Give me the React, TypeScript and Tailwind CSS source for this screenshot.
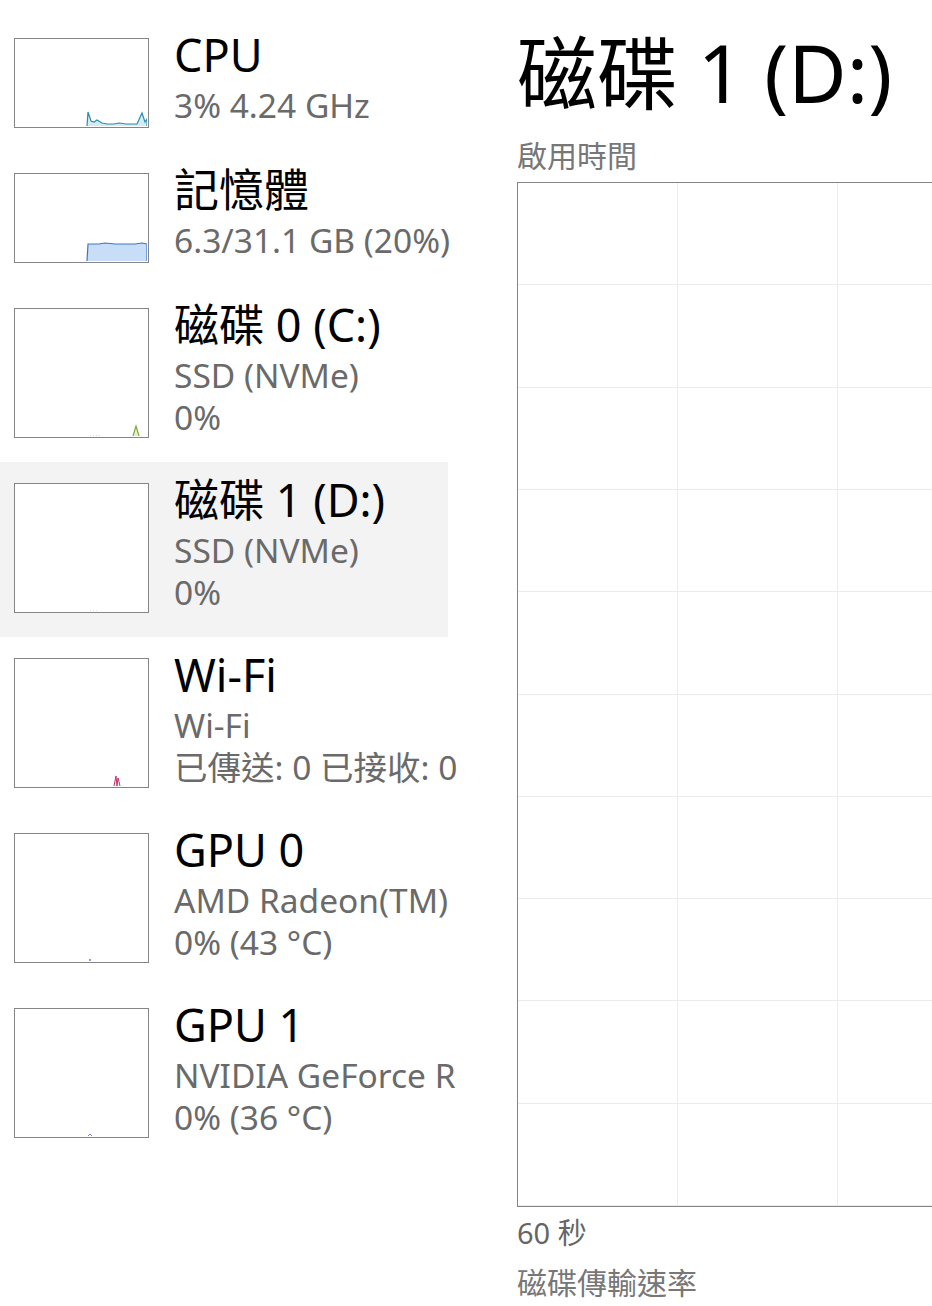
import type { ReactNode } from "react"

type Item = {
    title: string
    lines: string[]
    tall: boolean
    selected?: boolean
    graph: ReactNode
}

function MiniGraph({ tall, children }: { tall: boolean, children: ReactNode }) {
    const h = tall ? 130 : 90
    return (
        <div className={`shrink-0 w-[135px] border-[1.5px] border-[#858585] bg-white ${tall ? "h-[130px]" : "h-[90px]"}`}>
            <svg width="132" height={h - 3} viewBox={`0 0 132 ${h - 3}`} className="block">
                {children}
            </svg>
        </div>
    )
}

const items: Item[] = [
    {
        title: "CPU",
        lines: ["3% 4.24 GHz"],
        tall: false,
        graph: (
            <polyline
                points="72,87 73,73 76,82 79,83 82,81 87,84 92,85 99,85 104,84 111,85 122,85 127,74 130,83 132,80 132,87"
                fill="#d3ebf3" stroke="#2a8db0" strokeWidth="1.2" />
        ),
    },
    {
        title: "記憶體",
        lines: ["6.3/31.1 GB (20%)"],
        tall: false,
        graph: (
            <polyline
                points="72,87 73,70 84,70 90,69 100,70 120,70 127,69 132,70 132,87"
                fill="#c8ddf8" stroke="#3b78cc" strokeWidth="1.2" />
        ),
    },
    {
        title: "磁碟 0 (C:)",
        lines: ["SSD (NVMe)", "0%"],
        tall: true,
        graph: (
            <>
                <polyline points="75,127 85,127" fill="none" stroke="#a6c47a" strokeWidth="1" strokeDasharray="1 2" />
                <polyline points="118,127 121,117 124,127" fill="#e6f0c8" stroke="#7aa83a" strokeWidth="1.2" />
            </>
        ),
    },
    {
        title: "磁碟 1 (D:)",
        lines: ["SSD (NVMe)", "0%"],
        tall: true,
        selected: true,
        graph: <polyline points="75,127 84,127" fill="none" stroke="#b9ccb0" strokeWidth="1" strokeDasharray="1 2" />,
    },
    {
        title: "Wi-Fi",
        lines: ["Wi-Fi", "已傳送: 0 已接收: 0"],
        tall: true,
        graph: (
            <polyline points="99,127 101,117 102,127 103,119 105,127" fill="none" stroke="#c4306c" strokeWidth="1" />
        ),
    },
    {
        title: "GPU 0",
        lines: ["AMD Radeon(TM)", "0% (43 °C)"],
        tall: true,
        graph: <circle cx="75" cy="126" r="1" fill="#7a6fd0" />,
    },
    {
        title: "GPU 1",
        lines: ["NVIDIA GeForce R", "0% (36 °C)"],
        tall: true,
        graph: <polyline points="73,127 75,125 77,127" fill="none" stroke="#8a7ad8" strokeWidth="1" />,
    },
]

export default function App() {
    return (
        <div
            className="w-[932px] h-[1306px] overflow-hidden bg-white flex"
            style={{ fontFamily: '"Noto Sans", "Noto Sans CJK TC", sans-serif' }}
        >
            {/* left list */}
            <aside className="w-[448px] shrink-0 flex flex-col pt-[17px]">
                {items.map((item) => (
                    <section
                        key={item.title}
                        className={`flex gap-[25px] pl-[14px] pt-[21px] pb-[24px] ${item.selected ? "bg-[#f3f3f3]" : ""}`}
                    >
                        <MiniGraph tall={item.tall}>{item.graph}</MiniGraph>
                        <div className="flex flex-col whitespace-nowrap -mt-[12px]">
                            <span className="text-[45px] leading-[58px] text-black">{item.title}</span>
                            {item.lines.map((line) => (
                                <span key={line} className="text-[33.5px] leading-[42px] text-[#6a6a6a]">
                                    {line}
                                </span>
                            ))}
                        </div>
                    </section>
                ))}
            </aside>

            {/* detail */}
            <main className="flex-1 pl-[69px] pt-[22px]">
                <h1 className="text-[80px] leading-[100px] text-black whitespace-nowrap">磁碟 1 (D:)</h1>
                <p className="mt-[16px] text-[30px] leading-[36px] text-[#777]">啟用時間</p>
                <div className="mt-[8px] w-[820px] h-[1025px] border-[1.5px] border-[#858585] grid grid-cols-[repeat(5,160px)] grid-rows-[repeat(10,1fr)]">
                    {Array.from({ length: 50 }).map((_, i) => (
                        <div key={i} className="border-r border-b border-[#ececec]"></div>
                    ))}
                </div>
                <p className="mt-[6px] text-[29px] leading-[40px] text-[#666]">60 秒</p>
                <p className="mt-[10px] text-[30px] leading-[40px] text-[#777]">磁碟傳輸速率</p>
            </main>
        </div>
    )
}
